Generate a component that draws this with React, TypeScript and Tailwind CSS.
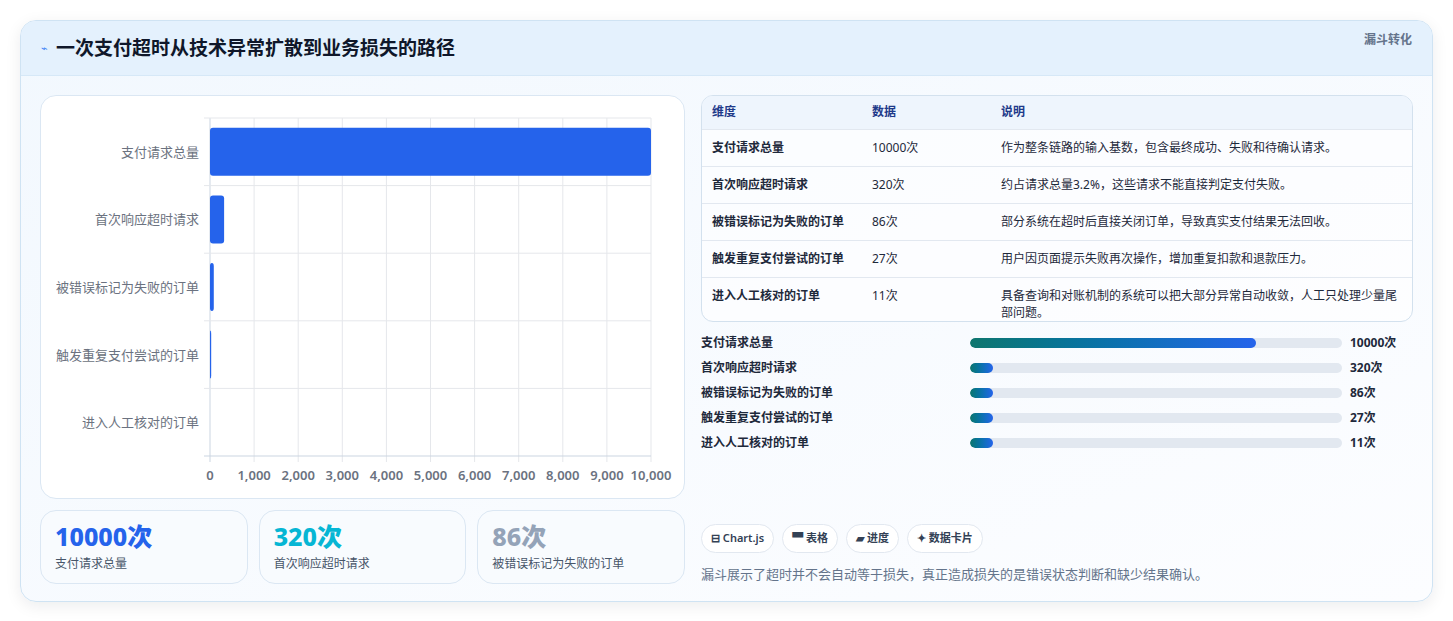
import React from 'react';

const rows = [
  { name: '支付请求总量', value: 10000, note: '作为整条链路的输入基数，包含最终成功、失败和待确认请求。' },
  { name: '首次响应超时请求', value: 320, note: '约占请求总量3.2%，这些请求不能直接判定支付失败。' },
  { name: '被错误标记为失败的订单', value: 86, note: '部分系统在超时后直接关闭订单，导致真实支付结果无法回收。' },
  { name: '触发重复支付尝试的订单', value: 27, note: '用户因页面提示失败再次操作，增加重复扣款和退款压力。' },
  { name: '进入人工核对的订单', value: 11, note: '具备查询和对账机制的系统可以把大部分异常自动收敛，人工只处理少量尾部问题。' },
];

const font = { fontFamily: '"Noto Sans", "Noto Sans CJK SC", sans-serif' };

const Chart: React.FC = () => {
  const x0 = 169;
  const x1 = 610;
  const y0 = 22;
  const y1 = 360;
  const rowH = (y1 - y0) / 5;
  return (
    <svg width="644" height="401" className="block">
      {Array.from({ length: 11 }).map((_, i) => {
        const x = x0 + ((x1 - x0) * i) / 10;
        return (
          <g key={i}>
            <line x1={x} y1={y0} x2={x} y2={y1 + 6} stroke={i === 0 ? '#cbd5e1' : '#e5e7eb'} />
            <text x={x} y={384} textAnchor="middle" fontSize="13" fontWeight="600" fill="#6b7280">
              {(i * 1000).toLocaleString('en-US')}
            </text>
          </g>
        );
      })}
      {Array.from({ length: 6 }).map((_, i) => (
        <line key={i} x1={x0 - 6} x2={x1} y1={y0 + rowH * i} y2={y0 + rowH * i} stroke={i === 5 ? '#cbd5e1' : '#e5e7eb'} />
      ))}
      {rows.map((r, i) => {
        const cy = y0 + rowH * i + rowH / 2;
        const w = Math.max(((x1 - x0) * r.value) / 10000, 1);
        return (
          <g key={r.name}>
            <text x={158} y={cy + 5} textAnchor="end" fontSize="13" fill="#6b7280">{r.name}</text>
            {r.value > 20 && <rect x={x0} y={cy - 24} width={w} height={48} rx={3} fill="#2563eb" />}
          </g>
        );
      })}
    </svg>
  );
};

export default function App() {
  return (
    <div className="min-h-screen bg-white pt-5 px-5" style={font}>
      <div className="rounded-2xl border border-[#cfe3f3] shadow-[0_4px_16px_rgba(15,23,42,0.08)] overflow-hidden bg-gradient-to-br from-[#f2f8fe] to-[#fcfdff]">
        <div className="h-[55px] flex items-center justify-between pl-5 pr-5 bg-[#e4f1fd] border-b border-[#d6e8f7]">
          <div className="flex items-center gap-2">
            <span className="text-[11px] text-[#3b82f6]">⌁</span>
            <h1 className="text-[19px] font-bold text-[#0f172a]">一次支付超时从技术异常扩散到业务损失的路径</h1>
          </div>
          <span className="text-[12px] font-semibold text-[#64748b] -mt-4">漏斗转化</span>
        </div>
        <div className="flex gap-4 p-[19px] pb-[17px]">
          <div className="w-[645px] flex flex-col gap-[11px]">
            <div className="h-[404px] rounded-2xl bg-white border border-[#dbe7f3]">
              <Chart />
            </div>
            <div className="grid grid-cols-3 gap-[11px]">
              {[
                { v: '10000次', c: 'text-[#2563eb]', l: '支付请求总量' },
                { v: '320次', c: 'text-[#06b6d4]', l: '首次响应超时请求' },
                { v: '86次', c: 'text-[#94a3b8]', l: '被错误标记为失败的订单' },
              ].map((s) => (
                <div key={s.l} className="h-[74px] rounded-2xl border border-[#dbe7f3] bg-[#f8fbfe] px-[14px] pt-[10px]">
                  <div className={`text-[25px] leading-[30px] font-extrabold ${s.c}`}>{s.v}</div>
                  <div className="text-[12px] text-[#475569] mt-[4px]">{s.l}</div>
                </div>
              ))}
            </div>
          </div>
          <div className="flex-1 flex flex-col">
            <div className="rounded-xl border border-[#d3e1ee] bg-white/60 overflow-hidden">
              <table className="w-full text-[12px] text-[#1e293b]">
                <thead className="bg-[#eef5fd] text-[#1e3a8a]">
                  <tr className="h-[33px] text-left">
                    <th className="pl-[10px] font-semibold w-[170px]">维度</th>
                    <th className="font-semibold w-[129px]">数据</th>
                    <th className="font-semibold">说明</th>
                  </tr>
                </thead>
                <tbody>
                  {rows.map((r, i) => (
                    <tr key={r.name} className="border-t border-[#e2e8f0] align-top">
                      <td className={`pl-[10px] pt-[9px] font-semibold ${i === 4 ? 'pb-[8px]' : 'pb-[9px]'}`}>{r.name}</td>
                      <td className="pt-[9px]">{r.value}次</td>
                      <td className="pt-[9px] pr-2 leading-[17px]">{r.note}</td>
                    </tr>
                  ))}
                </tbody>
              </table>
            </div>
            <div className="mt-[12px] flex flex-col gap-[7px]">
              {rows.map((r, i) => (
                <div key={r.name} className="flex items-center h-[18px] text-[12px]">
                  <span className="w-[269px] font-semibold text-[#1e293b]">{r.name}</span>
                  <div className="w-[372px] h-[10px] rounded-full bg-[#e2e8f0] overflow-hidden">
                    <div
                      className="h-full rounded-full bg-gradient-to-r from-[#0f766e] to-[#2563eb]"
                      style={{ width: i === 0 ? '77%' : '23px' }}
                    />
                  </div>
                  <span className="ml-2 font-bold text-[#1e293b]">{r.value}次</span>
                </div>
              ))}
            </div>
            <div className="mt-auto flex flex-col gap-[12px]">
              <div className="flex gap-2">
                {['⊟ Chart.js', '▀ 表格', '▰ 进度', '✦ 数据卡片'].map((t) => (
                  <span key={t} className="h-[29px] px-[9px] flex items-center rounded-full border border-[#e2e8f0] bg-white text-[11px] font-semibold text-[#334155]">
                    {t}
                  </span>
                ))}
              </div>
              <p className="text-[13px] text-[#64748b]">漏斗展示了超时并不会自动等于损失，真正造成损失的是错误状态判断和缺少结果确认。</p>
            </div>
          </div>
        </div>
      </div>
    </div>
  );
}
